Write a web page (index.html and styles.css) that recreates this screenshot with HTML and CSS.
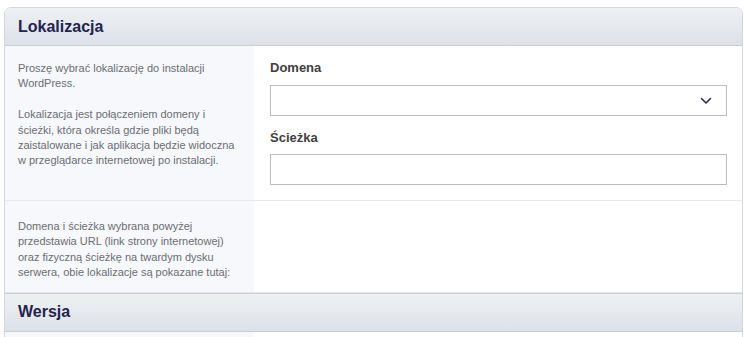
FILE: index.html
```html
<!DOCTYPE html>
<html lang="pl">
<head>
<meta charset="utf-8">
<link rel="stylesheet" href="styles.css">
</head>
<body>
<div class="card">
  <div class="section-head"><h2>Lokalizacja</h2></div>
  <div class="row">
    <div class="desc">
      <p>Proszę wybrać lokalizację do instalacji WordPress.</p>
      <p>Lokalizacja jest połączeniem domeny i ścieżki, która określa gdzie pliki będą zaistalowane i jak aplikacja będzie widoczna w przeglądarce internetowej po instalacji.</p>
    </div>
    <div class="fields">
      <label class="label">Domena</label>
      <div class="select">
        <svg class="chev" width="12" height="8" viewBox="0 0 12 8"><path d="M1.5 1.5 L6 6 L10.5 1.5" fill="none" stroke="#2c2d55" stroke-width="1.6" stroke-linecap="round" stroke-linejoin="round"/></svg>
      </div>
      <label class="label second">Ścieżka</label>
      <div class="input"></div>
    </div>
  </div>
  <div class="row">
    <div class="desc lower">
      <p>Domena i ścieżka wybrana powyżej przedstawia URL (link strony internetowej) oraz fizyczną ścieżkę na twardym dysku serwera, obie lokalizacje są pokazane tutaj:</p>
    </div>
    <div class="fields"></div>
  </div>
  <div class="section-head"><h2>Wersja</h2></div>
  <div class="row">
    <div class="desc short"></div>
    <div class="fields"></div>
  </div>
</div>
</body>
</html>
```
FILE: styles.css
```css
html, body {
  margin: 0;
  padding: 0;
  background: #ffffff;
  overflow: hidden;
}
body {
  padding: 7px 5px 0 4px;
  font-family: "Liberation Sans", Arial, sans-serif;
}
.card {
  border: 1px solid #d3d6dc;
  border-radius: 7px 7px 0 0;
  overflow: hidden;
  background: #ffffff;
}
.section-head {
  height: 37px;
  display: flex;
  align-items: center;
  padding: 0 13px;
  background: linear-gradient(#eef0f3, #dde2e8);
  border-bottom: 1px solid #c9cdd4;
}
.row + .section-head {
  border-top: 1px solid #c9cdd4;
}
.section-head h2 {
  margin: 0;
  font-size: 16px;
  font-weight: bold;
  color: #23234f;
}
.row {
  display: flex;
  border-bottom: 1px solid #e6e8ec;
}
.row:last-child {
  border-bottom: none;
}
.desc {
  width: 226px;
  flex: none;
  background: #f7f8fb;
  padding: 15px 10px 15px 13px;
  font-size: 11px;
  line-height: 15.4px;
  color: #6a6d72;
}
.desc.lower {
  padding-top: 18px;
  padding-bottom: 11px;
}
.desc.short {
  height: 10px;
  padding: 0;
  width: 249px;
}
.desc p {
  margin: 0;
}
.desc p + p {
  margin-top: 15.4px;
}
.fields {
  flex: 1;
  padding: 14px 15px 15px 16px;
  display: flex;
  flex-direction: column;
}
.label {
  font-size: 13px;
  font-weight: bold;
  color: #404040;
  line-height: 16px;
  margin-bottom: 9px;
}
.label.second {
  margin-top: 14px;
  margin-bottom: 8px;
}
.select, .input {
  height: 29px;
  border: 1px solid #b9bcc1;
  background: #fff;
}
.select {
  display: flex;
  align-items: center;
  justify-content: flex-end;
  padding-right: 14px;
}
.chev {
  display: block;
}
```
